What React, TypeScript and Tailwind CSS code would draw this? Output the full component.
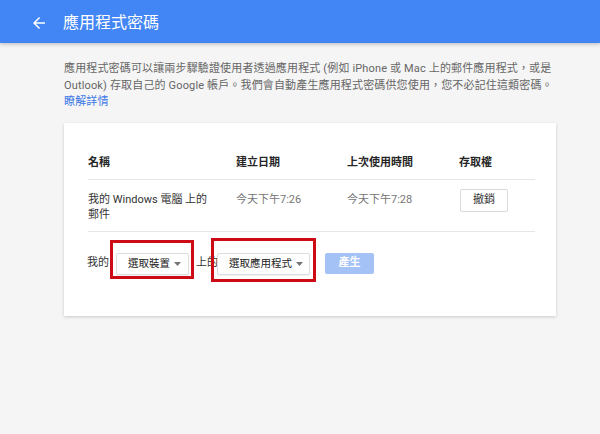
import React from "react";

const Caret = () => (
  <svg width="7" height="4" viewBox="0 0 7 4" className="shrink-0">
    <path d="M0 0h7L3.5 4z" fill="#757575" />
  </svg>
);

const App = () => {
  return (
    <div className="min-h-[434px] bg-[#f5f5f5] font-['Roboto','Noto_Sans_CJK_TC',sans-serif]">
      {/* Header */}
      <header className="flex h-[43px] items-center bg-[#4285f4] pl-[30px] shadow-[0_1px_4px_rgba(0,0,0,0.25)]">
        <svg width="18" height="18" viewBox="0 0 24 24" className="mt-[2px]">
          <path d="M20 11H7.83l5.59-5.59L12 4l-8 8 8 8 1.41-1.41L7.83 13H20v-2z" fill="#ffffff" />
        </svg>
        <h1 className="ml-[15px] mt-[2px] text-[16px] leading-[20px] text-white">應用程式密碼</h1>
      </header>

      <main className="ml-[64px] w-[492px] pt-[18px]">
        {/* Description */}
        <p className="whitespace-nowrap text-[11px] leading-[16.5px] tracking-[0.15px] text-[#666666]">
          應用程式密碼可以讓兩步驟驗證使用者透過應用程式 (例如 iPhone 或 Mac 上的郵件應用程式，或是
          <br />
          Outlook) 存取自己的 Google 帳戶。我們會自動產生應用程式密碼供您使用，您不必記住這類密碼。
          <br />
          <a href="#" className="text-[#3b78e7]">
            瞭解詳情
          </a>
        </p>

        {/* Card */}
        <section className="mt-[12px] bg-white pb-[41px] pl-[24px] pr-[21px] pt-[32px] shadow-[0_1px_3px_rgba(0,0,0,0.18)]">
          <div className="grid grid-cols-[148px_111px_112px_1fr] border-b border-[#e6e6e6] pb-[8px] text-[11px] font-bold leading-[16px] text-[#262626]">
            <div>名稱</div>
            <div>建立日期</div>
            <div>上次使用時間</div>
            <div>存取權</div>
          </div>

          <div className="grid grid-cols-[148px_111px_112px_1fr] border-b border-[#e6e6e6] pb-[8px] pt-[9px] text-[11px] leading-[15.5px]">
            <div className="pt-[3px] text-[#333333]">
              我的 Windows 電腦 上的
              <br />
              郵件
            </div>
            <div className="pt-[3px] text-[#757575]">今天下午7:26</div>
            <div className="pt-[3px] text-[#757575]">今天下午7:28</div>
            <div>
              <button className="ml-[1px] h-[23px] w-[48px] rounded-[2px] border border-[#d9d9d9] bg-white text-[11px] text-[#333333]">
                撤銷
              </button>
            </div>
          </div>

          {/* Generate row */}
          <div className="flex items-center pt-[21px] text-[11px] text-[#333333]">
            <span className="-ml-[1px]">我的</span>
            <div className="relative ml-[7px]">
              <button className="flex h-[22px] w-[73px] items-center justify-between whitespace-nowrap rounded-[2px] border border-[#dcdcdc] bg-white pl-[11px] pr-[7px] text-[10.5px] text-[#222222] shadow-[0_1px_1px_rgba(0,0,0,0.06)]">
                <span>選取裝置</span>
                <Caret />
              </button>
              <span className="pointer-events-none absolute -bottom-[4px] -left-[6px] -right-[5px] -top-[13px] border-[3px] border-[#cc0b16]" />
            </div>
            <span className="ml-[7px]">上的</span>
            <div className="relative ml-[-1px]">
              <button className="flex h-[22px] w-[93px] items-center justify-between whitespace-nowrap rounded-[2px] border border-[#dcdcdc] bg-white pl-[11px] pr-[6px] text-[10.5px] text-[#222222] shadow-[0_1px_1px_rgba(0,0,0,0.06)]">
                <span>選取應用程式</span>
                <Caret />
              </button>
              <span className="pointer-events-none absolute -bottom-[7px] -left-[6px] -right-[6px] -top-[15px] border-[3px] border-[#cc0b16]" />
            </div>
            <button className="ml-[15px] h-[21px] w-[49px] rounded-[2px] bg-[#a4c2f6] text-[11px] font-bold text-white">
              產生
            </button>
          </div>
        </section>
      </main>
    </div>
  );
};

export default App;
